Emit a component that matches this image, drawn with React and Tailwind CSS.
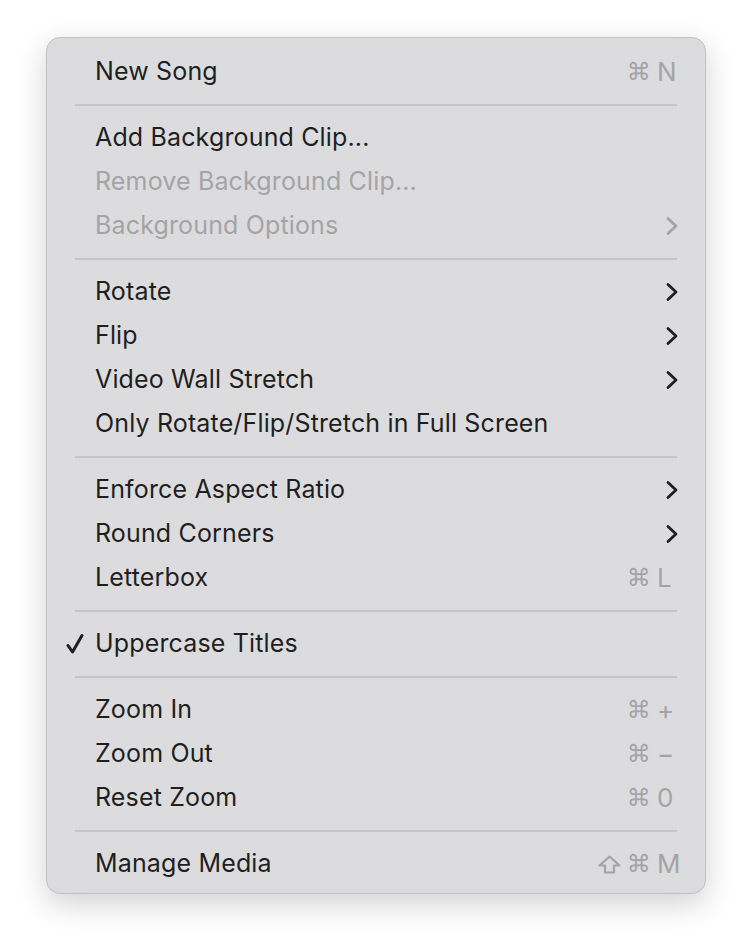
import React from "react";

const sections = [
  [{ label: "New Song", keys: ["cmd"], key: "N" }],
  [
    { label: "Add Background Clip..." },
    { label: "Remove Background Clip...", disabled: true },
    { label: "Background Options", disabled: true, submenu: true },
  ],
  [
    { label: "Rotate", submenu: true },
    { label: "Flip", submenu: true },
    { label: "Video Wall Stretch", submenu: true },
    { label: "Only Rotate/Flip/Stretch in Full Screen" },
  ],
  [
    { label: "Enforce Aspect Ratio", submenu: true },
    { label: "Round Corners", submenu: true },
    { label: "Letterbox", keys: ["cmd"], key: "L" },
  ],
  [{ label: "Uppercase Titles", checked: true }],
  [
    { label: "Zoom In", keys: ["cmd"], key: "+" },
    { label: "Zoom Out", keys: ["cmd"], key: "−" },
    { label: "Reset Zoom", keys: ["cmd"], key: "0" },
  ],
  [{ label: "Manage Media", keys: ["shift", "cmd"], key: "M" }],
];

const Chevron = ({ disabled }) => (
  <svg
    width="14"
    height="20"
    viewBox="0 0 14 20"
    className={disabled ? "text-[#a4a4a6]" : "text-[#1f1f1f]"}
  >
    <path
      d="M3 2.5 L11 10 L3 17.5"
      fill="none"
      stroke="currentColor"
      strokeWidth="2.8"
      strokeLinecap="round"
      strokeLinejoin="round"
    />
  </svg>
);

const Check = () => (
  <svg width="18" height="22" viewBox="0 0 18 22" className="text-[#1f1f1f]">
    <path
      d="M2 12.5 L6.5 19 L16 2.5"
      fill="none"
      stroke="currentColor"
      strokeWidth="3"
      strokeLinecap="round"
      strokeLinejoin="round"
    />
  </svg>
);

const Shift = () => (
  <svg width="23" height="19" viewBox="0 0 23 19" className="self-center">
    <path
      d="M11.5 1.5 L21.5 10.5 L16 10.5 L16 17.5 L7 17.5 L7 10.5 L1.5 10.5 Z"
      fill="none"
      stroke="currentColor"
      strokeWidth="2.2"
      strokeLinejoin="round"
    />
  </svg>
);

const Item = ({ item }) => (
  <div className="flex items-center h-[44px] pl-[48px] pr-[26px]">
    <div className="relative flex-1">
      {item.checked && (
        <span className="absolute left-[-29px] top-1/2 -translate-y-1/2 flex">
          <Check />
        </span>
      )}
      <span className={item.disabled ? "text-[#a4a4a6]" : "text-[#1f1f1f]"}>
        {item.label}
      </span>
    </div>
    {item.submenu && <Chevron disabled={item.disabled} />}
    {item.key && (
      <div className="flex items-center h-[30px] gap-[6px] text-[#a4a4a6] leading-none">
        {item.keys.map((k) =>
          k === "shift" ? (
            <Shift key={k} />
          ) : (
            <span key={k} className="font-['DejaVu_Sans',sans-serif] text-[24px]">
              ⌘
            </span>
          )
        )}
        <span className="w-[22px] text-[26px]">{item.key}</span>
      </div>
    )}
  </div>
);

export default function App() {
  return (
    <div className="min-h-[948px] bg-white pt-[37px] pl-[46px] font-['Inter',sans-serif] text-[25px] tracking-[0.15px]">
      <div className="w-[660px] h-[857px] rounded-[14px] border border-[#c2c2c4] bg-[#dcdcde] pt-[12px] shadow-[0_10px_30px_rgba(0,0,0,0.18)]">
        {sections.map((section, i) => (
          <div key={i}>
            {i > 0 && (
              <div className="h-[22px] flex items-center px-[28px]">
                <div className="h-[2px] w-full bg-[#c6c6c8]" />
              </div>
            )}
            {section.map((item) => (
              <Item key={item.label} item={item} />
            ))}
          </div>
        ))}
      </div>
    </div>
  );
}
